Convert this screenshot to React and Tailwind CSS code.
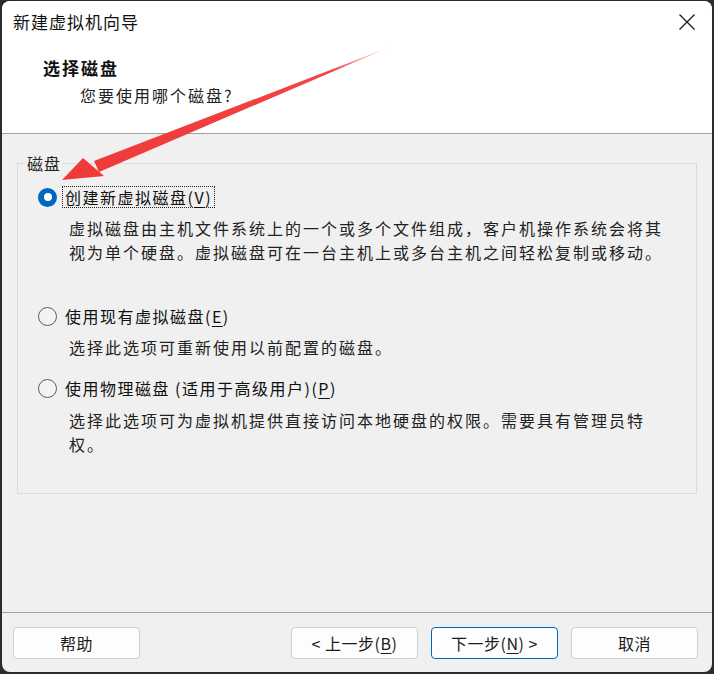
import React from "react";

const cjk = { fontFamily: '"Noto Sans CJK SC", "Noto Sans", sans-serif' };

function Radio({ checked }) {
  if (checked) {
    return (
      <span className="w-[19px] h-[19px] rounded-full bg-[#0067c0] flex items-center justify-center shrink-0">
        <span className="w-[8px] h-[8px] rounded-full bg-white" />
      </span>
    );
  }
  return <span className="w-[19px] h-[19px] rounded-full border border-[#5c5c5c] bg-[#f3f3f3] shrink-0" />;
}

function U({ children }) {
  return <span className="underline underline-offset-[3px] decoration-[1px]">{children}</span>;
}

function Btn({ children, primary }) {
  return (
    <button
      className={
        "w-[127px] h-[32px] rounded-[4px] bg-[#fdfdfd] text-[16px] tracking-[0.5px] text-[#1b1b1b] flex items-center justify-center border " +
        (primary ? "border-[#0067c0]" : "border-[#d0d0d0]")
      }
      style={cjk}
    >
      {children}
    </button>
  );
}

export default function App() {
  return (
    <div className="w-[714px] h-[674px] bg-[#2c2c2c] pt-[1px] pl-[2px]">
      <div className="relative w-[710px] h-[671px] rounded-[8px] overflow-hidden bg-[#f0f0f0] flex flex-col" style={cjk}>
        {/* title bar */}
        <div className="bg-white h-[42px] flex items-center justify-between pl-[11px] pr-[16px]">
          <span className="text-[17px] tracking-[1px] text-[#111]">新建虚拟机向导</span>
          <svg width="18" height="18" viewBox="0 0 18 18">
            <path d="M1.5 1.5 L16.5 16.5 M16.5 1.5 L1.5 16.5" stroke="#1a1a1a" strokeWidth="1.3" fill="none" />
          </svg>
        </div>
        {/* header */}
        <div className="bg-white h-[91px] border-b border-[#a0a0a0] pt-[13px]">
          <div className="pl-[41px] text-[17px] leading-[24px] font-bold tracking-[2px] text-[#111]">选择磁盘</div>
          <div className="pl-[78px] mt-[3px] text-[16px] leading-[24px] tracking-[2px] text-[#222]">您要使用哪个磁盘?</div>
        </div>
        {/* body */}
        <div className="flex-1 pt-[18px] px-[15px]">
          <fieldset className="border border-[#dcdcdc] pb-[37px] pt-[12px] m-0">
            <legend className="ml-[7px] px-[2px] text-[16px] leading-[22px] tracking-[1px] text-[#222]">磁盘</legend>
            <div className="pl-[20px]">
              <div className="flex items-center h-[22px]">
                <Radio checked />
                <span className="ml-[5px] h-[22px] px-[2px] flex items-center border border-dotted border-[#222] text-[16px] tracking-[1.5px] text-[#111]">
                  创建新虚拟磁盘(<U>V</U>)
                </span>
              </div>
              <div className="ml-[31px] mt-[8px] text-[16px] leading-[24px] tracking-[2px] text-[#222]">
                虚拟磁盘由主机文件系统上的一个或多个文件组成，客户机操作系统会将其
                <br />
                视为单个硬盘。虚拟磁盘可在一台主机上或多台主机之间轻松复制或移动。
              </div>
              <div className="flex items-center h-[22px] mt-[41px]">
                <Radio />
                <span className="ml-[8px] text-[16px] tracking-[1.5px] text-[#111]">
                  使用现有虚拟磁盘(<U>E</U>)
                </span>
              </div>
              <div className="ml-[31px] mt-[8px] text-[16px] leading-[24px] tracking-[2px] text-[#222]">
                选择此选项可重新使用以前配置的磁盘。
              </div>
              <div className="flex items-center h-[22px] mt-[18px]">
                <Radio />
                <span className="ml-[8px] text-[16px] tracking-[1.5px] text-[#111]">
                  使用物理磁盘 (适用于高级用户)(<U>P</U>)
                </span>
              </div>
              <div className="ml-[31px] mt-[9px] text-[16px] leading-[24px] tracking-[2px] text-[#222]">
                选择此选项可为虚拟机提供直接访问本地硬盘的权限。需要具有管理员特
                <br />
                权。
              </div>
            </div>
          </fieldset>
        </div>
        {/* footer */}
        <div className="border-t border-[#a0a0a0] h-[60px] pt-[14px] pl-[11px] pr-[14px] flex">
          <Btn>帮助</Btn>
          <div className="flex-1" />
          <div className="flex gap-[13px]">
            <Btn>&lt; 上一步(<U>B</U>)</Btn>
            <Btn primary>下一步(<U>N</U>) &gt;</Btn>
            <Btn>取消</Btn>
          </div>
        </div>

        {/* red annotation arrow */}
        <svg className="absolute left-0 top-0 pointer-events-none" width="710" height="671" viewBox="0 0 710 671">
          <defs>
            <linearGradient id="fade" x1="95" y1="162" x2="388" y2="46" gradientUnits="userSpaceOnUse">
              <stop offset="0" stopColor="#ef3a3a" stopOpacity="1" />
              <stop offset="0.8" stopColor="#ef3a3a" stopOpacity="0.95" />
              <stop offset="1" stopColor="#ef3a3a" stopOpacity="0.1" />
            </linearGradient>
          </defs>
          <polygon points="92,160 97,171 388,46" fill="url(#fade)" />
          <polygon points="60,179 81,157 102,175" fill="#ef3a3a" />
        </svg>
      </div>
    </div>
  );
}
